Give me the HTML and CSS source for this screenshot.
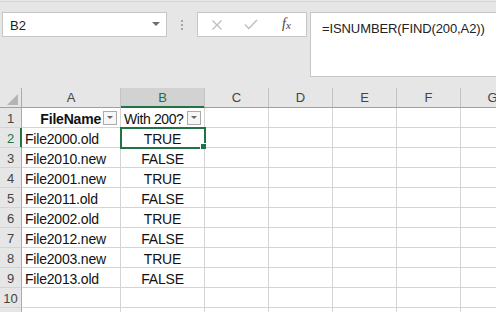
FILE: index.html
```html
<!DOCTYPE html>
<html lang="en">
<head>
    <meta charset="UTF-8">
    <title>Book1 - Excel</title>
    <link rel="stylesheet" href="styles.css">
</head>
<body>

    <!-- Name box and formula bar -->
    <div class="toolbar">
        <div class="namebox">
            <span>B2</span>
            <i class="caret"></i>
        </div>
        <div class="grip"><i></i><i></i><i></i></div>
        <div class="fbuttons">
            <svg class="icon" width="12" height="12" viewBox="0 0 12 12">
                <path d="M1.5 1.5 L10.5 10.5 M10.5 1.5 L1.5 10.5" stroke="#bdbdbd" stroke-width="1.3" fill="none"/>
            </svg>
            <svg class="icon" width="14" height="11" viewBox="0 0 14 11">
                <path d="M1 5.5 L4.8 9.5 L13 1" stroke="#bdbdbd" stroke-width="1.4" fill="none"/>
            </svg>
            <span class="fx">f<span>x</span></span>
        </div>
        <div class="formula">=ISNUMBER(FIND(200,A2))</div>
    </div>

    <!-- Worksheet -->
    <div class="sheet">
        <div class="row head">
            <div class="corner"><i></i></div>
            <div class="colhead col-a">A</div>
            <div class="colhead col-b active">B</div>
            <div class="colhead">C</div>
            <div class="colhead">D</div>
            <div class="colhead">E</div>
            <div class="colhead">F</div>
            <div class="colhead">G</div>
        </div>

        <div class="row">
            <div class="rowhead">1</div>
            <div class="cell col-a title">FileName<span class="filter"><i></i></span></div>
            <div class="cell col-b label">With 200?<span class="filter"><i></i></span></div>
            <div class="cell"></div><div class="cell"></div><div class="cell"></div><div class="cell"></div><div class="cell"></div>
        </div>
        <div class="row">
            <div class="rowhead active">2</div>
            <div class="cell col-a">File2000.old</div>
            <div class="cell col-b center">TRUE<div class="selection"><i></i></div></div>
            <div class="cell"></div><div class="cell"></div><div class="cell"></div><div class="cell"></div><div class="cell"></div>
        </div>
        <div class="row">
            <div class="rowhead">3</div>
            <div class="cell col-a">File2010.new</div>
            <div class="cell col-b center">FALSE</div>
            <div class="cell"></div><div class="cell"></div><div class="cell"></div><div class="cell"></div><div class="cell"></div>
        </div>
        <div class="row">
            <div class="rowhead">4</div>
            <div class="cell col-a">File2001.new</div>
            <div class="cell col-b center">TRUE</div>
            <div class="cell"></div><div class="cell"></div><div class="cell"></div><div class="cell"></div><div class="cell"></div>
        </div>
        <div class="row">
            <div class="rowhead">5</div>
            <div class="cell col-a">File2011.old</div>
            <div class="cell col-b center">FALSE</div>
            <div class="cell"></div><div class="cell"></div><div class="cell"></div><div class="cell"></div><div class="cell"></div>
        </div>
        <div class="row">
            <div class="rowhead">6</div>
            <div class="cell col-a">File2002.old</div>
            <div class="cell col-b center">TRUE</div>
            <div class="cell"></div><div class="cell"></div><div class="cell"></div><div class="cell"></div><div class="cell"></div>
        </div>
        <div class="row">
            <div class="rowhead">7</div>
            <div class="cell col-a">File2012.new</div>
            <div class="cell col-b center">FALSE</div>
            <div class="cell"></div><div class="cell"></div><div class="cell"></div><div class="cell"></div><div class="cell"></div>
        </div>
        <div class="row">
            <div class="rowhead">8</div>
            <div class="cell col-a">File2003.new</div>
            <div class="cell col-b center">TRUE</div>
            <div class="cell"></div><div class="cell"></div><div class="cell"></div><div class="cell"></div><div class="cell"></div>
        </div>
        <div class="row">
            <div class="rowhead">9</div>
            <div class="cell col-a">File2013.old</div>
            <div class="cell col-b center">FALSE</div>
            <div class="cell"></div><div class="cell"></div><div class="cell"></div><div class="cell"></div><div class="cell"></div>
        </div>
        <div class="row">
            <div class="rowhead">10</div>
            <div class="cell col-a"></div>
            <div class="cell col-b"></div>
            <div class="cell"></div><div class="cell"></div><div class="cell"></div><div class="cell"></div><div class="cell"></div>
        </div>
        <div class="row">
            <div class="rowhead"></div>
            <div class="cell col-a"></div>
            <div class="cell col-b"></div>
            <div class="cell"></div><div class="cell"></div><div class="cell"></div><div class="cell"></div><div class="cell"></div>
        </div>
    </div>

</body>
</html>
```

FILE: styles.css
```css
body {
    margin: 0;
    background-color: #e6e6e6;
    font-family: 'Liberation Sans', Arial, sans-serif;
    color: #000;
    overflow: hidden;
    width: 496px;
    height: 312px;
}

/* ---- formula bar ---- */

.toolbar {
    display: flex;
    align-items: flex-start;
    margin-top: 1px;
    border-top: 1px solid #d5d5d5;
    padding: 10px 0 11px 2px;
    height: 65px;
}

.namebox {
    position: relative;
    box-sizing: border-box;
    width: 165px;
    height: 25px;
    background-color: #fff;
    border: 1px solid #c6c6c6;
    padding: 5px 0 0 7px;
    font-size: 13px;
    line-height: 16px;
    color: #222;
}

.caret {
    position: absolute;
    right: 6px;
    top: 9px;
    width: 0;
    height: 0;
    border-left: 4px solid transparent;
    border-right: 4px solid transparent;
    border-top: 4px solid #6d6d6d;
}

.grip {
    width: 30px;
    height: 25px;
    display: flex;
    flex-direction: column;
    align-items: center;
    padding-top: 8px;
    box-sizing: border-box;
    gap: 2px;
}

.grip i {
    width: 2px;
    height: 2px;
    background-color: #a6a6a6;
}

.fbuttons {
    box-sizing: border-box;
    width: 110px;
    height: 25px;
    background-color: #fff;
    border: 1px solid #c6c6c6;
    display: flex;
    align-items: center;
    padding-left: 13px;
}

.fbuttons .icon:nth-child(2) {
    margin-left: 21px;
}

.fx {
    margin-left: 24px;
    font-family: 'Liberation Serif', serif;
    font-style: italic;
    font-size: 14px;
    color: #444;
    margin-top: -2px;
}

.fx span {
    font-size: 11px;
    position: relative;
    top: 1px;
}

.formula {
    flex: 1;
    box-sizing: border-box;
    height: 65px;
    margin-left: 3px;
    margin-right: -2px;
    background-color: #fff;
    border: 1px solid #c6c6c6;
    padding: 8px 0 0 11px;
    font-size: 13px;
    line-height: 16px;
    letter-spacing: -0.1px;
    color: #222;
}

/* ---- worksheet ---- */

.sheet {
    background-color: #fff;
}

.row {
    display: flex;
    height: 20px;
}

.row > div {
    flex: none;
    box-sizing: border-box;
    height: 20px;
    width: 64px;
    border-right: 1px solid #d4d4d4;
    border-bottom: 1px solid #d4d4d4;
}

.row > .col-a {
    width: 99px;
}

.row > .col-b {
    width: 84px;
}

.row > .corner,
.row > .rowhead {
    width: 22px;
    background-color: #e6e6e6;
    border-right-color: #ababab;
}

.head > div {
    background-color: #e6e6e6;
    border-bottom-color: #9f9f9f;
    border-right-color: #c2c2c2;
}

.corner {
    position: relative;
}

.corner i {
    position: absolute;
    right: 3px;
    bottom: 2px;
    width: 0;
    height: 0;
    border-left: 11px solid transparent;
    border-bottom: 11px solid #b4b4b4;
}

.colhead {
    text-align: center;
    font-size: 13px;
    line-height: 19px;
    color: #444;
}

.head > .colhead.active {
    background-color: #d2d2d2;
    color: #217346;
    box-shadow: inset 0 -1px #217346;
    border-bottom-color: #217346;
}

.rowhead {
    text-align: center;
    font-size: 13px;
    line-height: 16px;
    padding-top: 3px;
    color: #444;
}

.rowhead.active {
    color: #217346;
    box-shadow: inset -1px 0 #217346;
    border-right-color: #217346;
}

.cell {
    position: relative;
    font-size: 14px;
    line-height: 16px;
    letter-spacing: -0.2px;
    padding: 3px 0 0 3px;
    white-space: nowrap;
    color: #111;
}

.cell.center {
    text-align: center;
    padding-left: 0;
}

.cell.title {
    font-weight: bold;
    text-align: right;
    padding-right: 19px;
}

.cell.label {
    letter-spacing: -0.4px;
}

.filter {
    position: absolute;
    right: 3px;
    top: 3px;
    box-sizing: border-box;
    width: 14px;
    height: 14px;
    border: 1px solid #ababab;
    background-color: #f7f7f7;
}

.filter i {
    position: absolute;
    left: 3px;
    top: 4px;
    width: 0;
    height: 0;
    border-left: 3px solid transparent;
    border-right: 3px solid transparent;
    border-top: 3px solid #666;
}

.selection {
    position: absolute;
    left: -1px;
    top: -1px;
    right: -2px;
    bottom: -2px;
    border: 2px solid #217346;
    z-index: 2;
}

.selection i {
    position: absolute;
    right: -2px;
    bottom: -2px;
    width: 5px;
    height: 5px;
    background-color: #217346;
    border-left: 1px solid #fff;
    border-top: 1px solid #fff;
}
```
